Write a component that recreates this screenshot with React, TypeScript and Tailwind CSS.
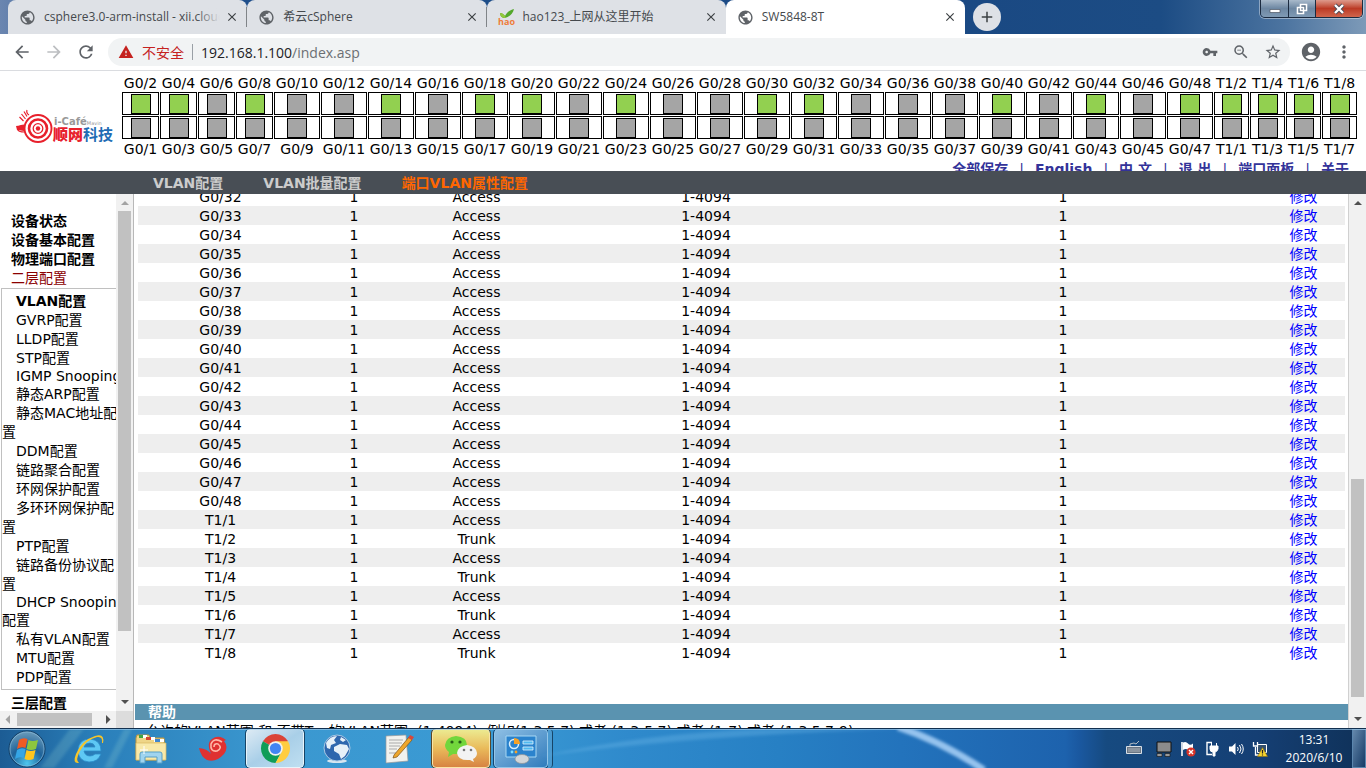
import React from "react";
import {
  MdArrowBack,
  MdArrowForward,
  MdRefresh,
  MdWarning,
  MdVpnKey,
  MdZoomOut,
  MdStarBorder,
  MdAccountCircle,
  MdMoreVert,
  MdPublic,
  MdClose,
  MdAdd,
} from "react-icons/md";

const LIT = ["G0/2", "G0/4", "G0/8", "G0/14", "G0/18", "G0/20", "G0/24", "G0/30", "G0/32", "G0/40", "G0/44", "G0/48", "T1/2", "T1/4", "T1/6", "T1/8"];

type PortPair = { top: string; bottom: string; width: string };

const PORTS: PortPair[] = [
  ...Array.from({ length: 24 }, (_, i) => ({
    top: `G0/${i * 2 + 2}`,
    bottom: `G0/${i * 2 + 1}`,
    width: i < 4 ? "grow-37" : "grow-46",
  })),
  ...Array.from({ length: 4 }, (_, i) => ({
    top: `T1/${i * 2 + 2}`,
    bottom: `T1/${i * 2 + 1}`,
    width: "grow-35",
  })),
];

const ROWS = [
  ...Array.from({ length: 17 }, (_, i) => ({ port: `G0/${32 + i}`, mode: "Access" })),
  ...Array.from({ length: 8 }, (_, i) => ({ port: `T1/${i + 1}`, mode: i % 2 ? "Trunk" : "Access" })),
];

function Tab({ title, icon, active, divider, fade }: { title: string; icon?: React.ReactNode; active?: boolean; divider?: boolean; fade?: boolean }) {
  return (
    <div className={`flex h-[34px] min-w-0 flex-1 items-center rounded-t-lg pr-2 pl-[11px] ${active ? "bg-white" : "bg-[#dee1e6]"}`}>
      <a href="#tab" className="flex min-w-0 flex-1 items-center gap-2">
        {icon ?? <MdPublic className="size-[17px] shrink-0 text-[#5f6368]" />}
        <span className="relative min-w-0 flex-1 overflow-hidden text-[12px] leading-5 whitespace-nowrap text-[#45494d]">
          {title}
          {fade && <span className="absolute inset-y-0 right-0 w-6 bg-linear-to-r from-transparent to-[#dee1e6]" />}
        </span>
      </a>
      <button aria-label="关闭标签页" className="ml-1 flex size-4 items-center justify-center text-[#3c4043]">
        <MdClose className="size-3.5" />
      </button>
      <span className={`ml-1.5 -mr-2 h-5 w-px ${divider ? "bg-[#808488]" : ""}`} />
    </div>
  );
}

function HaoIcon() {
  return (
    <svg viewBox="0 0 17 16" className="h-4 w-[17px] shrink-0">
      <path d="M2 4c3 0 4 2 5 3 2-4 5-6 9-7-1 5-5 8-9 9C4 9 2 7 2 4z" fill="#54a82c" />
      <path d="M2 4c3 0 4 2 5 3l1 2C4 9 2 7 2 4z" fill="#93c83c" />
      <text x="8.500" y="15.500" textAnchor="middle" fontFamily="Open Sans" fontSize="9" fontWeight="700" fill="#ee7c3a">hao</text>
    </svg>
  );
}

function Logo() {
  return (
    <div className="relative mt-[37px] ml-[15px] h-9 w-[101px]">
      <svg viewBox="0 0 40 36" className="h-9 w-10">
        <g fill="none" stroke="#e8202c">
          <circle cx="23" cy="20.500" r="13.500" strokeWidth="1.900" />
          <circle cx="23" cy="20.500" r="9" strokeWidth="2.600" />
          <circle cx="23" cy="20.500" r="4.800" strokeWidth="1.300" />
          <path d="M9 17c-8 1-9 7 1 7M4.500 9l4 4M6.500 6l4 5M9 3.500l3 5M12 2q-1 3 2 5" strokeWidth="1.200" />
        </g>
        <circle cx="23" cy="20.500" r="2.200" fill="#e8202c" />
        <path d="M1 18l8-1v6l-7-1z" fill="#e8202c" />
      </svg>
      <span className="absolute top-2 left-[39px] font-['DejaVu_Sans'] text-[10px] leading-3 font-bold whitespace-nowrap text-[#999]">
        i-Café<span className="text-[5px] font-normal">Mavin</span>
      </span>
      <span className="absolute top-[15px] left-[38px] text-[15px] leading-6 font-black whitespace-nowrap text-[#e8202c]">
        顺网<span className="font-bold text-[#1f6cb4]">科技</span>
      </span>
    </div>
  );
}

function Lamp({ on }: { on: boolean }) {
  return (
    <div className="flex h-[23px] justify-center border border-black pt-px">
      <span className={`size-5 border border-black ${on ? "bg-[#92d050]" : "bg-[#a5a5a5]"}`} />
    </div>
  );
}

function Arrow({ dir, light }: { dir: "up" | "down" | "left" | "right"; light?: boolean }) {
  const d = { up: "M5 11h8l-4-4z", down: "M5 6h8l-4 4z", left: "M10 4v9l-4.500-4.500z", right: "M7 4v9l4.500-4.500z" }[dir];
  return (
    <svg viewBox="0 0 17 17" className="size-[17px] shrink-0">
      <path d={d} fill={light ? "#a3a3a3" : "#505050"} />
    </svg>
  );
}

const SUBMENU: { text: React.ReactNode; latin?: boolean; bold?: boolean }[] = [
  { text: "VLAN配置", bold: true },
  { text: "GVRP配置" },
  { text: "LLDP配置" },
  { text: "STP配置" },
  { text: "IGMP Snooping", latin: true },
  { text: "静态ARP配置" },
  { text: <>静态MAC地址配<br />置</> },
  { text: "DDM配置" },
  { text: "链路聚合配置" },
  { text: "环网保护配置" },
  { text: <>多环环网保护配<br />置</> },
  { text: "PTP配置" },
  { text: <>链路备份协议配<br />置</> },
  { text: "DHCP Snooping", latin: true },
  { text: "私有VLAN配置" },
  { text: "MTU配置" },
  { text: "PDP配置" },
];

function Sidebar() {
  return (
    <aside className="flex w-[134px] shrink-0 flex-col border-r border-[#b8b8b8]">
      <div className="flex min-h-0 flex-1">
        <nav className="flex min-w-0 flex-1 flex-col overflow-hidden pt-[18px] leading-[19px] whitespace-nowrap">
          <a href="#status" className="pl-[11px] font-bold">设备状态</a>
          <a href="#basic" className="pl-[11px] font-bold">设备基本配置</a>
          <a href="#port" className="pl-[11px] font-bold">物理端口配置</a>
          <a href="#l2" className="pl-[11px] text-[#8b0000]">二层配置</a>
          <ul className="-mr-1 ml-px border border-[#c0c0c0] pt-[3px] pb-0.5">
            {SUBMENU.map((m, i) => (
              <React.Fragment key={i}>
                <li className={`indent-3.5 ${m.latin ? "leading-[17px]" : ""} ${m.bold ? "font-bold" : ""}`}>
                  <a href="#item">{m.text}</a>
                </li>
                {i === 13 && <li><a href="#item">配置</a></li>}
              </React.Fragment>
            ))}
          </ul>
          <a href="#l3" className="pt-1 pl-[11px] font-bold">三层配置</a>
        </nav>
        <div className="flex w-[17px] shrink-0 flex-col items-center bg-[#f1f1f1]">
          <Arrow dir="up" light />
          <span className="w-[13px] grow-420 bg-[#c1c1c1]" />
          <span className="grow-63" />
          <Arrow dir="down" />
        </div>
      </div>
      <div className="flex h-[17px] shrink-0">
        <div className="flex flex-1 items-center bg-[#f1f1f1]">
          <Arrow dir="left" light />
          <span className="h-[13px] grow-75 bg-[#c1c1c1]" />
          <span className="grow-7" />
          <Arrow dir="right" />
        </div>
        <div className="w-[17px] bg-[#dcdcdc]" />
      </div>
    </aside>
  );
}

function Task({ label, children, className = "w-[58px]" }: { label: string; children: React.ReactNode; className?: string }) {
  return (
    <button aria-label={label} className={`flex h-[39px] shrink-0 items-center justify-center ${className}`}>
      {children}
    </button>
  );
}

function Taskbar() {
  return (
    <footer className="relative flex h-10 shrink-0 items-center overflow-hidden border-t border-[#12304f] bg-[linear-gradient(90deg,#1c5c94_0%,#2a7fba_7%,#3b98d0_20%,#3a9ad4_36%,#2f8acc_46%,#2780c4_57%,#2373bc_66%,#1d62ad_78%,#1a58a0_79%,#164a80_81%,#153f74_92%,#0f3158_100%)] font-['Open_Sans','Noto_Sans_CJK_SC',sans-serif]">
      <svg className="pointer-events-none absolute inset-0 size-full" viewBox="0 0 1366 40" preserveAspectRatio="none">
        <defs>
          <filter id="soft"><feGaussianBlur stdDeviation="1.500" /></filter>
        </defs>
        <g filter="url(#soft)">
          <path d="M40 40L70 0h14L54 40zM104 40L124 0h8L112 40z" fill="#9fdcd0" fillOpacity=".2" />
          <path d="M540 28Q650 4 760 0h140Q700 6 540 28z" fill="#7cc0ee" fillOpacity=".3" />
          <path d="M898-2Q940 12 984 42" fill="none" stroke="#a2ccf4" strokeWidth="7" strokeOpacity=".9" />
        </g>
        <path d="M0 .5h1366" stroke="#9cc8e8" strokeOpacity=".7" />
      </svg>
      <Task label="开始" className="w-[54px]">
        <svg viewBox="0 0 38 38" className="size-[38px]">
          <defs>
            <radialGradient id="orb" cx=".5" cy=".9" r=".9">
              <stop offset="0" stopColor="#4fc6ee" />
              <stop offset=".5" stopColor="#1e6299" />
              <stop offset="1" stopColor="#6e9dbb" />
            </radialGradient>
          </defs>
          <circle cx="19" cy="19" r="18" fill="url(#orb)" stroke="#123d63" />
          <circle cx="19" cy="19" r="17" fill="none" stroke="#8fc2e2" strokeOpacity=".6" />
          <path d="M11 10q4-3 8.500-1l-2 9q-4-2-8.500 1z" fill="#ee5a24" />
          <path d="M20.500 10q4 2 9.500 0l-2 9q-5 2-9.500 0z" fill="#8cc63e" />
          <path d="M9 20q4-3 8.500-1l-2 9q-4-2-8.500 1z" fill="#35a6e6" />
          <path d="M18.500 20q4 2 9 0l-2 9q-5 2-9 0z" fill="#fdc51e" />
        </svg>
      </Task>
      <div className="ml-1.5 flex gap-1">
        <Task label="Internet Explorer">
          <svg viewBox="0 0 34 34" className="size-[34px]">
            <path d="M29 19H12q1 5 6 5 3 0 5-2h6q-3 8-12 8Q6 29 6 18 7 7 18 7q11 1 11 12zM12 15h11q-1-4-5-4-5 0-6 4z" fill="#5ec8f4" stroke="#2b8cc8" strokeWidth=".800" />
            <path d="M31 11q2-10-8-7Q10 8 4 22q-4 10 3 9-4-3 1-12Q15 7 25 5q6-1 5 6z" fill="#f6c52a" />
          </svg>
        </Task>
        <Task label="资源管理器">
          <svg viewBox="0 0 34 32" className="h-8 w-[34px]">
            <path d="M2 5l1-3h12l1 3h14l1 22H2z" fill="#eed587" stroke="#b89440" />
            <path d="M5 2h8v3H5zM12 4h9v3h-9zM20 6h10v3H20z" fill="#fff" />
            <path d="M5 2h4v3H5z" fill="#3ea542" /><path d="M12 4h5v3h-5z" fill="#d64530" /><path d="M21 6h5v3h-5z" fill="#3e86cf" />
            <path d="M2 10h30v17H2z" fill="#f8e9a9" stroke="#d8b960" strokeWidth=".700" />
            <path d="M6 30V21q0-2 2-2h18q2 0 2 2v9h-5v-6H11v6z" fill="#9fd4ef" stroke="#579fc7" />
            <path d="M10 13v8M6 17h8" stroke="#fff" />
          </svg>
        </Task>
        <Task label="螺旋">
          <svg viewBox="0 0 30 28" className="h-7 w-[30px]">
            <path d="M1 13q9 1 12 6Q8 8 14 4q5-4 11-1l3 2-2 1q5 6 0 13-8 9-17 6-6-3-8-12z" fill="#df3131" />
            <path d="M24 7q-8-5-11 2-1 8 6 7 6-3 1-7-4-1-4 3" fill="none" stroke="#ffb6a6" strokeWidth="1.600" />
          </svg>
        </Task>
        <Task label="Google Chrome" className="w-[58px] rounded-sm border border-[#e8f4fb] bg-linear-to-br from-[#dceaf4] via-[#a9cfe8] to-[#bfdff1] outline outline-[#164467]">
          <svg viewBox="0 0 32 32" className="size-[31px]">
            <path d="M16 16L3.010 8.500A15 15 0 0 1 28.990 8.500z" fill="#db4437" />
            <path d="M16 16L3.010 8.500A15 15 0 0 0 16 31l6.500-12z" fill="#0f9d58" />
            <path d="M16 16l6.500 3L16 31A15 15 0 0 0 28.990 8.500H16z" fill="#ffcd40" />
            <circle cx="16" cy="16" r="7.500" fill="#f1f1f1" /><circle cx="16" cy="16" r="5.800" fill="#4285f4" />
          </svg>
        </Task>
        <Task label="网络">
          <svg viewBox="0 0 30 30" className="size-[30px]">
            <ellipse cx="15" cy="27" rx="10" ry="2" fill="#d6e6f0" />
            <circle cx="15" cy="14" r="13" fill="#2e67ae" stroke="#a9c9e4" />
            <path d="M4 9q4-7 11-7l-3 4 2 3-5 2-1 4-3-1zM12 13l6-3 7 1 2 4-4 7-4 3-2-5-5-3zM19 3l5 3-3 2-3-2z" fill="#e6f0f8" />
          </svg>
        </Task>
        <Task label="写字板">
          <svg viewBox="0 0 32 32" className="size-8">
            <path d="M3 3l20-1 2 26-22 2z" fill="#f2f2ee" stroke="#999" strokeWidth=".700" />
            <path d="M6 7h14M6 10h13M6 13h11M6 16h8M6 20h7" stroke="#aaa" />
            <path d="M11 22L26 4l3 3-15 17-4 1z" fill="#eea62b" stroke="#7c531a" strokeWidth=".700" />
            <path d="M25 5l2-3 4 2-2 3z" fill="#d7483c" />
          </svg>
        </Task>
        <Task label="微信" className="w-[58px] rounded-sm border border-[#f9e5a8] bg-linear-to-b from-[#ecea90] via-[#e9ba5a] to-[#d78343] outline outline-[#5b4a28]">
          <svg viewBox="0 0 34 28" className="h-7 w-[34px]">
            <path d="M12 1q11 1 11 9-1 9-11 9l-3 0-5 3 1-5Q1 14 1 10 2 2 12 1z" fill="#72d63c" />
            <path d="M23 10q9 1 10 8 0 4-4 6l1 3-4-2q-12 1-13-7 1-7 10-8z" fill="#f3f3f3" />
            <circle cx="8" cy="7" r="1.600" fill="#275d17" /><circle cx="16" cy="7" r="1.600" fill="#275d17" />
            <circle cx="20" cy="15" r="1.300" fill="#777" /><circle cx="27" cy="15" r="1.300" fill="#777" />
          </svg>
        </Task>
        <div className="flex">
          <Task label="控制面板" className="w-[54px] rounded-sm border border-[#94c6e8] bg-linear-to-br from-[#8dbfe4] to-[#2f7cbc] outline outline-[#18456f]">
            <svg viewBox="0 0 32 30" className="h-[30px] w-8">
              <path d="M1 2h30v21H1z" fill="#2b83cd" stroke="#a8d8f4" />
              <circle cx="9" cy="10" r="4.500" fill="none" stroke="#d8effc" strokeWidth="1.500" />
              <path d="M9 10V4q6 0 6 6z" fill="#f6a227" />
              <path d="M18 7h10v3H18zM18 13h10v3H18z" fill="#50b8f0" stroke="#e2f4fe" strokeWidth=".800" />
              <circle cx="7" cy="18" r="1.400" fill="#7fe0ff" /><circle cx="11" cy="18" r="1.400" fill="#f6a227" />
              <ellipse cx="17" cy="25" rx="7" ry="4.500" fill="#d2d6d9" stroke="#8c9296" strokeWidth=".700" />
            </svg>
          </Task>
          <span className="h-[39px] w-[5px] rounded-r-sm border-r border-[#164467] bg-[#4a9ad0]" />
        </div>
      </div>
      <div className="ml-auto flex h-full items-center text-white">
        <button aria-label="输入法">
          <svg viewBox="0 0 16 16" className="mb-1 size-4">
            <path d="M.5 7.500h15v7H.5z" fill="#6b7683" stroke="#d8dfe6" />
            <path d="M2.500 10h11M2.500 12h11" stroke="#eef1f4" strokeDasharray="1 1" /><path d="M4 7V5l4-1 2 1 3-3" fill="none" stroke="#b4bcc4" />
          </svg>
        </button>
        <button aria-label="显示" className="ml-3.5">
          <svg viewBox="0 0 16 16" className="size-4">
            <path d="M1 1h14v10H1z" fill="#8c8c8c" stroke="#111" /><path d="M1 12.500h5v3H1zM9 12.500h5v3H9z" fill="#999" stroke="#111" strokeWidth=".600" />
          </svg>
        </button>
        <button aria-label="操作中心" className="ml-2">
          <svg viewBox="0 0 16 16" className="size-4">
            <path d="M2 1v14" stroke="#fff" strokeWidth="1.600" /><path d="M3 1.500q3-1.500 5 1t5 0v6.500q-3 2-5 0t-5 0z" fill="#fff" />
            <circle cx="11" cy="11" r="4.600" fill="#d73328" /><path d="M9 9l4 4M13 9l-4 4" stroke="#fff" strokeWidth="1.400" />
          </svg>
        </button>
        <button aria-label="电源" className="ml-2">
          <svg viewBox="0 0 16 16" className="size-4">
            <path d="M8 1.500H3v12h5" fill="none" stroke="#fff" strokeWidth="1.400" /><path d="M6 5h8v3q-1 3-3 3v4H9v-4q-3 0-3-3zM7.500 2v3M12.500 2v3" fill="#fff" stroke="#fff" />
          </svg>
        </button>
        <button aria-label="音量" className="ml-2">
          <svg viewBox="0 0 16 16" className="size-4">
            <path d="M1 5.500h3L7.500 2v12L4 10.500H1z" fill="#fff" /><path d="M9.500 6q1.500 2 0 4M11.500 4q3 4 0 8M13.500 3q3.500 5 0 10" fill="none" stroke="#fff" />
          </svg>
        </button>
        <button aria-label="网络状态" className="ml-2">
          <svg viewBox="0 0 16 16" className="size-4">
            <path d="M5.500 3.500h9v8h-9z" fill="#33506f" stroke="#fff" /><path d="M3.500 6v8h4M1.500 1v4h4V1" fill="none" stroke="#fff" strokeWidth="1.300" />
            <path d="M10.500 6.500l5 9h-10z" fill="#f6d32d" stroke="#8a6d10" strokeWidth=".600" /><path d="M10.500 9v3.500M10.500 13.500v1" stroke="#222" strokeWidth="1.200" />
          </svg>
        </button>
        <button className="ml-3 w-[68px] text-center text-[12px] leading-[18px]">
          13:31
          <br />
          2020/6/10
        </button>
        <button aria-label="显示桌面" className="ml-1 h-[39px] w-3.5 border border-[#5b86ae] bg-linear-to-br from-[#6488ac] to-[#163b66]" />
      </div>
    </footer>
  );
}

export default function App() {
  return (
    <div className="flex h-screen flex-col overflow-hidden bg-white font-['DejaVu_Sans','Noto_Sans_CJK_SC',sans-serif] text-[14px] text-black">
      <div className="flex h-[34px] shrink-0 items-start bg-[linear-gradient(90deg,#6b86b0_0%,#1f4f8c_8%,#1a4983_72%,#1c4c84_85%,#4c74a0_94%,#7d9ab8_100%)] pl-2 font-['Open_Sans','Noto_Sans_CJK_SC',sans-serif]">
        <div className="flex max-w-[957px] flex-1">
          <Tab title="csphere3.0-arm-install - xii.cloud" divider fade />
          <Tab title="希云cSphere" divider />
          <Tab title="hao123_上网从这里开始" icon={<HaoIcon />} />
          <Tab title="SW5848-8T" active />
        </div>
        <button aria-label="新标签页" className="mt-[3px] ml-2 flex size-7 items-center justify-center rounded-full bg-[#dee1e6] text-[#3c4043]">
          <MdAdd className="size-[18px]" />
        </button>
        <div className="mr-[3px] ml-auto flex h-[18px] overflow-hidden rounded-b-[5px] border border-t-0 border-[#1b2b40] ring-1 ring-white/40">
          <button aria-label="最小化" className="flex w-7 items-center justify-center border-r border-[#1b2b40] bg-linear-to-b from-[#a9bacb] via-[#6d87a2] to-[#7f9ab4]">
            <svg viewBox="0 0 12 12" className="size-3"><path d="M1 6.500h10v3H1z" fill="#fff" stroke="#4b5563" strokeWidth=".700" /></svg>
          </button>
          <button aria-label="还原" className="flex w-[27px] items-center justify-center border-r border-[#1b2b40] bg-linear-to-b from-[#a9bacb] via-[#6d87a2] to-[#7f9ab4]">
            <svg viewBox="0 0 12 12" className="size-3"><path d="M4.500 1.500h6v6h-6zM1.500 4.500h6v6h-6z" fill="#5b7187" stroke="#fff" strokeWidth="1.600" /></svg>
          </button>
          <button aria-label="关闭" className="flex w-[46px] items-center justify-center bg-linear-to-b from-[#dd9a8c] via-[#bb3a25] to-[#d0654c]">
            <svg viewBox="0 0 12 12" className="size-3"><path d="M2 2l8 8M10 2l-8 8" stroke="#4a4a55" strokeWidth="4" /><path d="M2 2l8 8M10 2l-8 8" stroke="#fff" strokeWidth="2.400" /></svg>
          </button>
        </div>
      </div>

      <div className="flex h-[37px] shrink-0 items-center border-b border-[#dadce0] pr-3 pl-3 font-['Open_Sans','Noto_Sans_CJK_SC',sans-serif] text-[#5f6368]">
        <button aria-label="后退"><MdArrowBack className="size-5" /></button>
        <button aria-label="前进" className="ml-3 text-[#bcbec1]"><MdArrowForward className="size-5" /></button>
        <button aria-label="重新加载" className="ml-3"><MdRefresh className="size-5" /></button>
        <div className="ml-3 flex h-7 flex-1 items-center rounded-full bg-[#f1f3f4] pr-2 pl-2.5">
          <MdWarning className="size-4 text-[#c5221f]" />
          <span className="ml-2 text-[14px] text-[#c5221f]">不安全</span>
          <span className="ml-2 h-4 w-px bg-[#9aa0a6]" />
          <a href="#address" className="ml-2 text-[14px] text-[#6b6f73]"><span className="text-[#202124]">192.168.1.100</span>/index.asp</a>
          <button aria-label="密码" className="ml-auto"><MdVpnKey className="size-4" /></button>
          <button aria-label="缩放" className="ml-3.5"><MdZoomOut className="size-[18px]" /></button>
          <button aria-label="收藏" className="ml-3.5"><MdStarBorder className="size-[18px]" /></button>
        </div>
        <button aria-label="用户" className="ml-2.5"><MdAccountCircle className="size-[22px]" /></button>
        <button aria-label="菜单" className="ml-3"><MdMoreVert className="size-5" /></button>
      </div>

      <header className="flex h-[100px] shrink-0 overflow-hidden">
        <Logo />
        <div className="mr-[9px] ml-1.5 flex min-w-0 flex-1 flex-col pt-[3px]">
          <div className="flex gap-px">
            {PORTS.map((p) => (
              <div key={p.top} className={`flex w-0 flex-col text-center whitespace-nowrap ${p.width}`}>
                <span className="leading-[18px]">{p.top}</span>
                <div className="flex flex-col gap-px">
                  <Lamp on={LIT.includes(p.top)} />
                  <Lamp on={false} />
                </div>
                <span className="mt-px leading-[18px]">{p.bottom}</span>
              </div>
            ))}
          </div>
          <div className="flex shrink-0 justify-end gap-[11px] pr-2 text-[14px] leading-[22px] font-bold whitespace-nowrap text-[#333399]">
            <a href="#save">全部保存</a><span className="font-normal">|</span>
            <a href="#en">English</a><span className="font-normal">|</span>
            <a href="#zh">中 文</a><span className="font-normal">|</span>
            <a href="#exit">退 出</a><span className="font-normal">|</span>
            <a href="#panel">端口面板</a><span className="font-normal">|</span>
            <a href="#about">关于</a>
          </div>
        </div>
      </header>

      <nav className="flex h-[23px] shrink-0 items-center gap-10 bg-[#484e55] pt-0.5 pl-[153px] font-bold text-[#ccc]">
        <a href="#vlan">VLAN配置</a>
        <a href="#batch">VLAN批量配置</a>
        <a href="#attr" className="text-[#ff6600]">端口VLAN属性配置</a>
      </nav>

      <div className="flex min-h-0 flex-1">
        <Sidebar />
        <main className="min-w-0 flex-1 overflow-hidden">
          <div className="-mt-[7px] pr-1 pl-1">
            <table className="w-full table-fixed border-collapse text-center">
              <colgroup>
                <col className="w-[165px]" />
                <col className="w-[102px]" />
                <col className="w-[143px]" />
                <col className="w-[316px]" />
                <col className="w-[398px]" />
                <col className="w-[83px]" />
              </colgroup>
              <tbody className="[&_td]:pt-0.5">
                {ROWS.map((r) => (
                  <tr key={r.port} className="h-[19px] leading-[17px] even:bg-[#eeeeee]">
                    <td>{r.port}</td>
                    <td>1</td>
                    <td>{r.mode}</td>
                    <td>1-4094</td>
                    <td>1</td>
                    <td><a href="#edit" className="text-[#0000ff]">修改</a></td>
                  </tr>
                ))}
              </tbody>
            </table>
          </div>
          <section className="mt-[42px] ml-px">
            <h2 className="h-4 bg-[#5a93b0] pl-[13px] leading-4 font-bold text-white">帮助</h2>
            <p className="pl-[11px] leading-[22px] whitespace-nowrap">允许的VLAN范围 和 不带Tag的VLAN范围: (1-4094), 例如(1,3,5,7) 或者 (1,3-5,7) 或者 (1-7) 或者 (1,3,5,7-9)</p>
          </section>
        </main>
        <div className="flex w-[18px] shrink-0 flex-col items-center border-l border-[#d0d0d0] bg-[#f1f1f1]">
          <Arrow dir="up" />
          <span className="grow-268" />
          <span className="w-[13px] grow-218 bg-[#c1c1c1]" />
          <span className="grow-14" />
          <Arrow dir="down" />
        </div>
      </div>

      <Taskbar />
    </div>
  );
}
